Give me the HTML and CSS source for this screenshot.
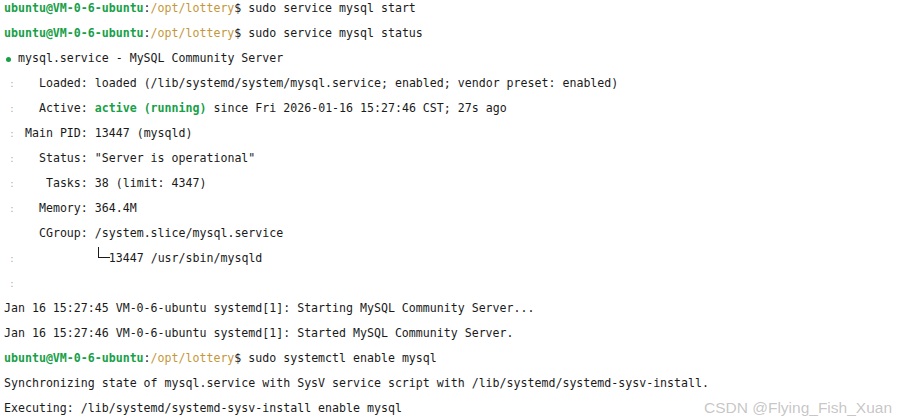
FILE: index.html
```html
<!DOCTYPE html>
<html>
<head>
<meta charset="utf-8">
<link rel="stylesheet" href="styles.css">
</head>
<body>
<div class="term">
<div class="ln"><span class="usr">ubuntu@VM-0-6-ubuntu</span>:<span class="path">/opt/lottery</span>$ sudo service mysql start</div>
<div class="ln"><span class="usr">ubuntu@VM-0-6-ubuntu</span>:<span class="path">/opt/lottery</span>$ sudo service mysql status</div>
<div class="ln"><span class="bul"><span class="dot"></span></span> mysql.service - MySQL Community Server</div>
<div class="ln"><span class="gut">:</span>   Loaded: loaded (/lib/systemd/system/mysql.service; enabled; vendor preset: enabled)</div>
<div class="ln"><span class="gut">:</span>   Active: <span class="ok">active (running)</span> since Fri 2026-01-16 15:27:46 CST; 27s ago</div>
<div class="ln"><span class="gut">:</span> Main PID: 13447 (mysqld)</div>
<div class="ln"><span class="gut">:</span>   Status: "Server is operational"</div>
<div class="ln"><span class="gut">:</span>    Tasks: 38 (limit: 4347)</div>
<div class="ln"><span class="gut">:</span>   Memory: 364.4M</div>
<div class="ln"><span class="gut"> </span>   CGroup: /system.slice/mysql.service</div>
<div class="ln"><span class="gut">:</span>           <span class="tree"></span>13447 /usr/sbin/mysqld</div>
<div class="ln"><span class="gut">:</span></div>
<div class="ln">Jan 16 15:27:45 VM-0-6-ubuntu systemd[1]: Starting MySQL Community Server...</div>
<div class="ln">Jan 16 15:27:46 VM-0-6-ubuntu systemd[1]: Started MySQL Community Server.</div>
<div class="ln"><span class="usr">ubuntu@VM-0-6-ubuntu</span>:<span class="path">/opt/lottery</span>$ sudo systemctl enable mysql</div>
<div class="ln">Synchronizing state of mysql.service with SysV service script with /lib/systemd/systemd-sysv-install.</div>
<div class="ln">Executing: /lib/systemd/systemd-sysv-install enable mysql</div>
</div>
<div class="wm">CSDN @Flying_Fish_Xuan</div>
</body>
</html>
```
FILE: styles.css
```css
html, body {
  margin: 0;
  padding: 0;
  background: #ffffff;
  overflow: hidden;
  height: 420px;
}
.term {
  margin-top: -4px;
  padding-left: 4px;
  font-family: "DejaVu Sans Mono", "Liberation Mono", monospace;
  font-size: 11.6px;
  line-height: 25px;
  color: #1a1a1a;
}
.ln {
  height: 25px;
  white-space: pre;
}
.usr {
  color: #17a047;
  font-weight: bold;
}
.path {
  color: #c4973a;
}
.ok {
  color: #17a047;
  font-weight: bold;
}
.gut {
  display: inline-block;
  box-sizing: border-box;
  width: 14px;
  padding-left: 2px;
  text-align: center;
  font-size: 8px;
  color: #a8a8a8;
}
.bul {
  display: inline-block;
  width: 7px;
  height: 25px;
  vertical-align: top;
  position: relative;
}
.dot {
  position: absolute;
  left: 2px;
  top: 11px;
  width: 5px;
  height: 5px;
  border-radius: 50%;
  background: #17a047;
}
.tree {
  display: inline-block;
  width: 14px;
  height: 25px;
  vertical-align: top;
  position: relative;
}
.tree::before {
  content: "";
  position: absolute;
  left: 3px;
  top: 1px;
  width: 11px;
  height: 10px;
  border-left: 1px solid #1a1a1a;
  border-bottom: 1px solid #1a1a1a;
}
.wm {
  position: absolute;
  right: 5px;
  bottom: 3px;
  font-family: "Liberation Sans", Arial, sans-serif;
  font-size: 15.5px;
  color: rgba(150, 150, 150, 0.55);
}
```
